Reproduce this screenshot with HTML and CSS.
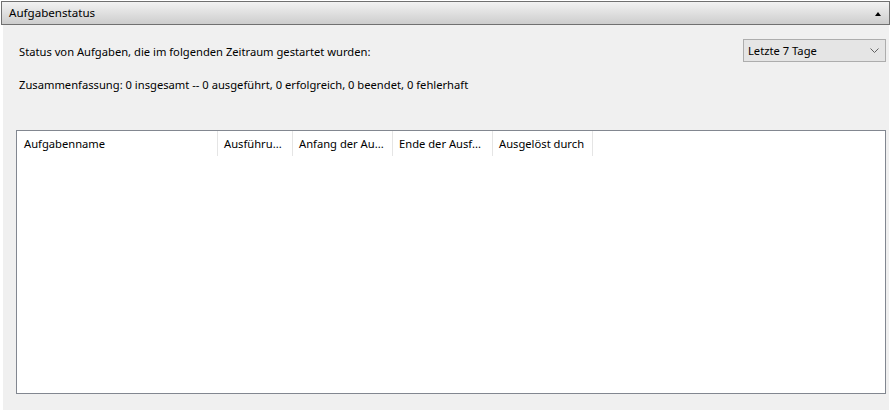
FILE: index.html
```html
<!DOCTYPE html>
<html lang="de">
<head>
<meta charset="utf-8">
<title>Aufgabenstatus</title>
<link rel="stylesheet" href="styles.css">
</head>
<body>
<div class="panel">
  <div class="panel-header">
    <span class="panel-title">Aufgabenstatus</span>
    <svg class="collapse" width="6" height="4" viewBox="0 0 6 4"><polygon points="0,4 6,4 3,0" fill="#000"/></svg>
  </div>
  <div class="panel-body">
    <div class="status-row">
      <span class="label">Status von Aufgaben, die im folgenden Zeitraum gestartet wurden:</span>
      <div class="select">
        <span>Letzte 7 Tage</span>
        <svg class="chev" width="9" height="5" viewBox="0 0 9 5"><polyline points="0.5,0.5 4.5,4.5 8.5,0.5" fill="none" stroke="#606060" stroke-width="1"/></svg>
      </div>
    </div>
    <div class="summary">Zusammenfassung: 0 insgesamt -- 0 ausgeführt, 0 erfolgreich, 0 beendet, 0 fehlerhaft</div>
    <div class="list">
      <div class="list-head">
        <div class="col c1">Aufgabenname</div>
        <div class="col c2">Ausführu...</div>
        <div class="col c3">Anfang der Au...</div>
        <div class="col c4">Ende der Ausf...</div>
        <div class="col c5">Ausgelöst durch</div>
      </div>
    </div>
  </div>
</div>
</body>
</html>
```
FILE: styles.css
```css
html, body {
  margin: 0;
  padding: 0;
  background: #ffffff;
}
body {
  font-family: "Noto Sans", "Open Sans", sans-serif;
  font-size: 11.2px;
  color: #000;
}
.panel {
  padding-top: 1px;
  width: 889px;
}
.panel-header {
  margin-left: 1px;
  height: 22px;
  border: 1px solid #707070;
  background: linear-gradient(#f2f2f2, #cdcdcd);
  display: flex;
  align-items: center;
  justify-content: space-between;
  padding: 0 8px 0 7px;
  box-sizing: content-box;
  width: 872px;
}
.panel-title {
  font-size: 11.6px;
  line-height: 16px;
}
.collapse {
  display: block;
  margin-top: 1px;
}
.panel-body {
  margin-left: 3px;
  width: 886px;
  box-sizing: border-box;
  background: #f0f0f0;
  padding: 14px 3px 16px 13px;
}
.status-row {
  display: flex;
  align-items: center;
  justify-content: space-between;
  height: 23px;
}
.label {
  margin: 2px 0 0 3px;
}
.select {
  height: 21px;
  border: 1px solid #adadad;
  background: #e5e5e5;
  display: flex;
  align-items: center;
  justify-content: space-between;
  padding: 0 6px 0 4px;
  box-sizing: content-box;
  width: 131px;
}
.chev {
  display: block;
}
.summary {
  margin: 15px 0 0 3px;
  line-height: 16px;
}
.list {
  margin-top: 37px;
  height: 262px;
  border: 1px solid #828790;
  background: #fff;
}
.list-head {
  display: flex;
  height: 25px;
}
.col {
  border-right: 1px solid #e5e5e5;
  box-sizing: border-box;
  padding-left: 6px;
  display: flex;
  align-items: center;
  white-space: nowrap;
  overflow: hidden;
}
.c1 { width: 201px; padding-left: 7px; }
.c2 { width: 75px; }
.c3 { width: 100px; }
.c4 { width: 100px; }
.c5 { width: 100px; }
```
